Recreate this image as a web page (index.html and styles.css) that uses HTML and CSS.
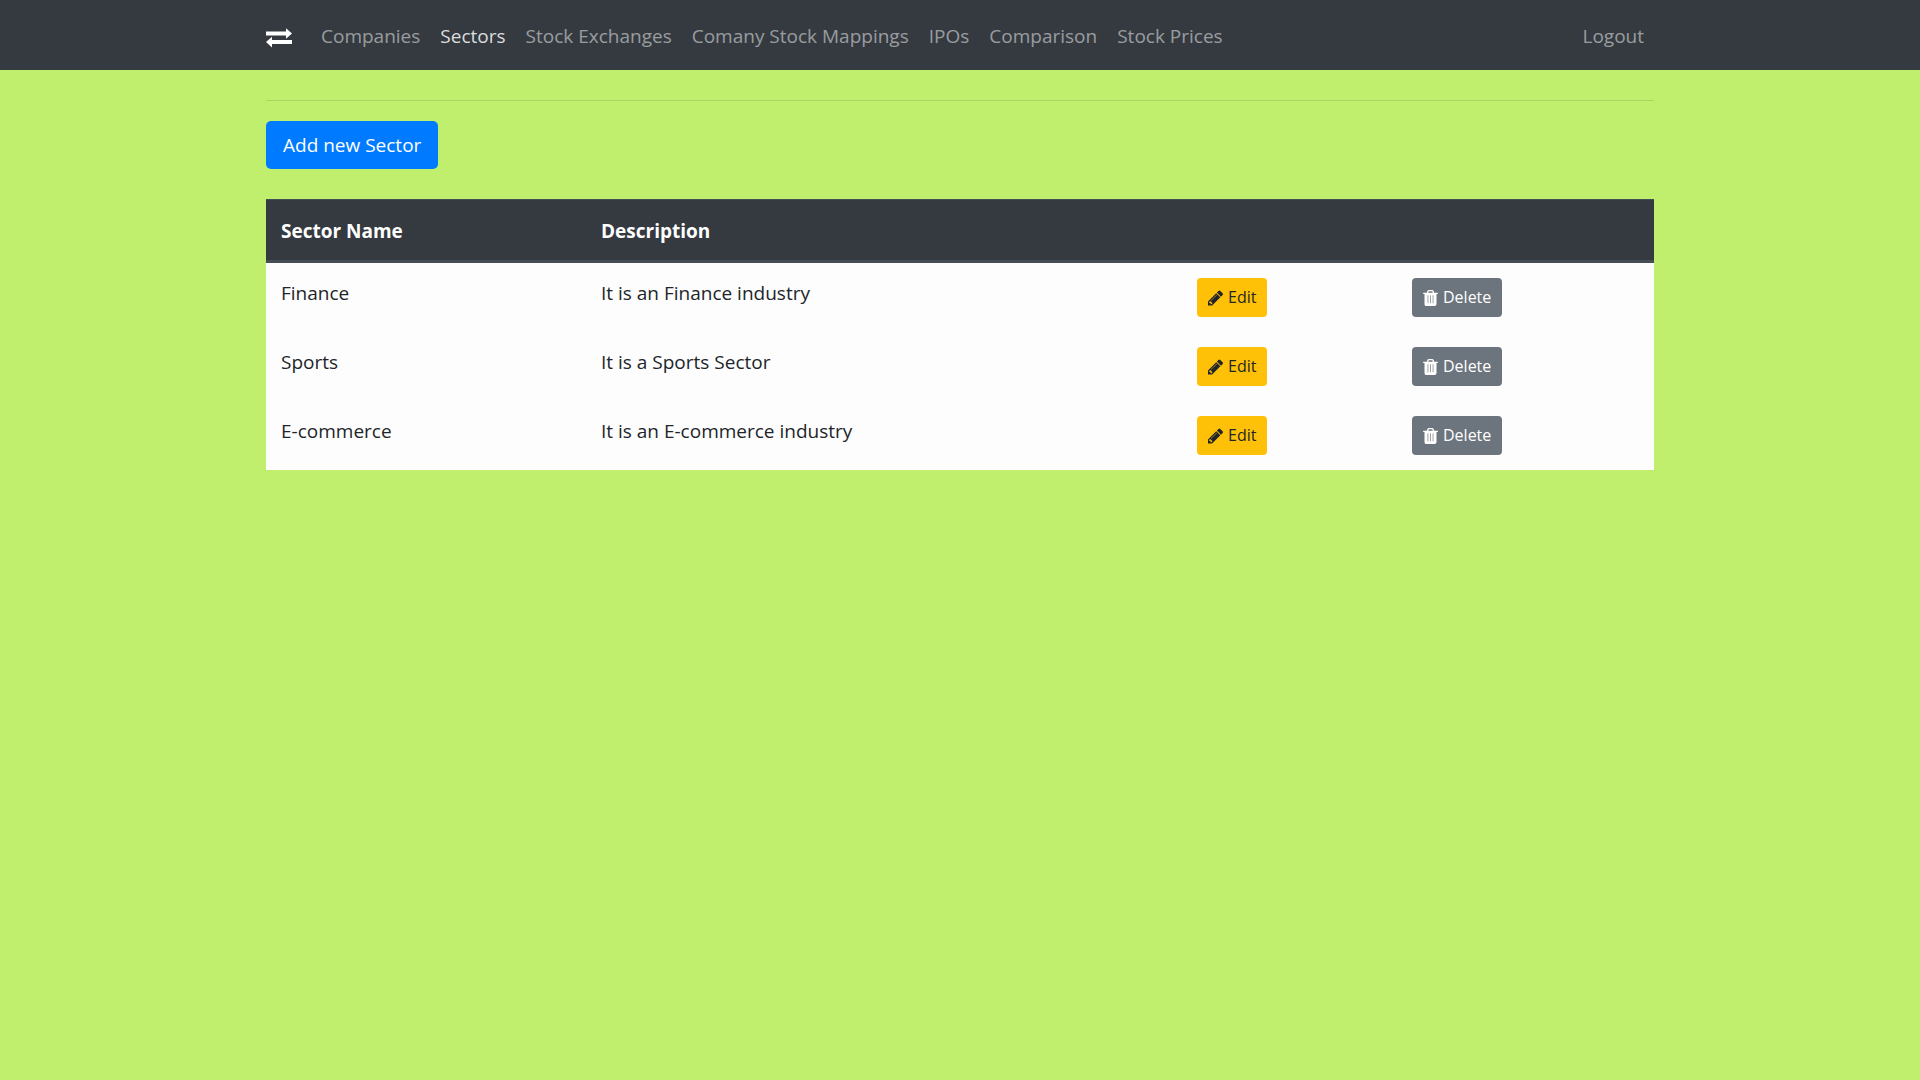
FILE: index.html
```html
<!DOCTYPE html>
<html lang="en">
<head>
<meta charset="utf-8">
<meta name="viewport" content="width=device-width, initial-scale=1">
<title>Sectors</title>
<link rel="stylesheet" href="styles.css">
</head>
<body>
<svg class="sprite" aria-hidden="true">
  <symbol id="pencil" viewBox="128 149 1515 1515"><path d="M491 1536l91-91-235-235-91 91v107h128v128h107zm523-928q0-22-22-22-10 0-17 7l-542 542q-7 7-7 17 0 22 22 22 10 0 17-7l542-542q7-7 7-17zm-54-192l416 416-832 832h-416v-416zm683 96q0 53-37 90l-166 166-416-416 166-165q36-38 90-38 53 0 91 38l235 234q37 39 37 91z"/></symbol>
  <symbol id="trash" viewBox="192 128 1408 1536"><path fill-rule="evenodd" d="M620 640h64v768h-64zM864 640h64v768h-64zM1108 640h64v768h-64zM672 384h448l-48-117q-7-9-17-11h-317q-10 2-17 11zm928 32v64q0 14-9 23t-23 9h-96v948q0 83-47 143.5t-113 60.5h-832q-66 0-113-58.5t-47-141.5v-952h-96q-14 0-23-9t-9-23v-64q0-14 9-23t23-9h309l70-167q15-37 54-63t79-26h320q40 0 79 26t54 63l70 167h309q14 0 23 9t9 23z"/></symbol>
</svg>
<header class="navbar">
  <nav class="container navbar-inner">
    <a class="brand" href="#" aria-label="Home">
      <svg class="brand-icon" viewBox="0 0 26 20"><path d="M0 3.5H20V.3L26 5.5L20 10.7V7.5H0ZM26 12H6V8.8L0 14L6 19.6V16H26Z"/></svg>
    </a>
    <ul class="nav">
      <li><a class="nav-link" href="#">Companies</a></li>
      <li><a class="nav-link active" href="#" aria-current="page">Sectors</a></li>
      <li><a class="nav-link" href="#">Stock Exchanges</a></li>
      <li><a class="nav-link" href="#">Comany Stock Mappings</a></li>
      <li><a class="nav-link" href="#">IPOs</a></li>
      <li><a class="nav-link" href="#">Comparison</a></li>
      <li><a class="nav-link" href="#">Stock Prices</a></li>
    </ul>
    <a class="nav-link logout" href="#">Logout</a>
  </nav>
</header>
<main class="container">
  <hr class="divider">
  <button class="btn btn-primary" type="button">Add new Sector</button>
  <table class="table">
    <colgroup><col class="col-name"><col><col class="col-edit"><col class="col-delete"></colgroup>
    <thead>
      <tr><th scope="col">Sector Name</th><th scope="col">Description</th><th></th><th></th></tr>
    </thead>
    <tbody>
      <tr>
        <td>Finance</td><td>It is an Finance industry</td>
        <td><button class="btn btn-sm btn-warning" type="button"><svg class="icon"><use href="#pencil"/></svg>Edit</button></td>
        <td><button class="btn btn-sm btn-secondary" type="button"><svg class="icon"><use href="#trash"/></svg>Delete</button></td>
      </tr>
      <tr>
        <td>Sports</td><td>It is a Sports Sector</td>
        <td><button class="btn btn-sm btn-warning" type="button"><svg class="icon"><use href="#pencil"/></svg>Edit</button></td>
        <td><button class="btn btn-sm btn-secondary" type="button"><svg class="icon"><use href="#trash"/></svg>Delete</button></td>
      </tr>
      <tr>
        <td>E-commerce</td><td>It is an E-commerce industry</td>
        <td><button class="btn btn-sm btn-warning" type="button"><svg class="icon"><use href="#pencil"/></svg>Edit</button></td>
        <td><button class="btn btn-sm btn-secondary" type="button"><svg class="icon"><use href="#trash"/></svg>Delete</button></td>
      </tr>
    </tbody>
  </table>
</main>
</body>
</html>
```
FILE: styles.css
```css
*, *::before, *::after { box-sizing: border-box; }

body {
  margin: 0;
  background: #bfef6c;
  color: #212529;
  font-family: "Segoe UI", "Open Sans", "Noto Sans", sans-serif;
  font-size: 19px;
  line-height: 30px;
}

.sprite { display: none; }

.container {
  width: 100%;
  max-width: 1428px;
  margin: 0 auto;
  padding: 0 20px;
}

.navbar { background: #343a40; }

.navbar-inner {
  display: flex;
  align-items: center;
  min-height: 70px;
}

.brand {
  display: flex;
  margin-right: 19px;
  padding-top: 6px;
}

.brand-icon {
  width: 26px;
  height: 20px;
  fill: #fff;
}

.nav {
  display: flex;
  flex-wrap: wrap;
  margin: 0;
  padding: 0;
  list-style: none;
}

.nav-link {
  display: block;
  padding: 11px 10px 9px;
  color: rgba(255, 255, 255, .5);
  text-decoration: none;
}

.nav-link.active { color: #dcddde; }

.logout { margin-left: auto; }

.divider {
  margin: 30px 0 20px;
  border: 0;
  border-top: 1px solid rgba(0, 0, 0, .1);
}

.btn {
  display: inline-flex;
  align-items: center;
  justify-content: center;
  padding: 8px 16px;
  border: 1px solid transparent;
  border-radius: 5px;
  font: inherit;
  cursor: pointer;
}

.btn-primary { background: #007bff; color: #fff; }
.btn-warning { background: #ffc107; color: #212529; }
.btn-secondary { background: #6c757d; color: #fff; }

.btn-sm {
  gap: 5px;
  padding: 5px 10px;
  border-radius: 4px;
  font-size: 16px;
  line-height: 27px;
}

.icon {
  width: 15px;
  height: 16px;
  fill: currentColor;
}

.table {
  width: 100%;
  margin-top: 30px;
  border-spacing: 0;
  table-layout: fixed;
  background: #fdfdfd;
}

.col-name { width: 320px; }
.col-edit { width: 215px; }
.col-delete { width: 257px; }

.table th {
  padding: 16px 15px 14px;
  border-top: 1px solid #454d55;
  border-bottom: 3px solid #454d55;
  background: #343a40;
  color: #fff;
  font-weight: 700;
  text-align: left;
}

.table td {
  padding: 15px;
  vertical-align: top;
}

.table td .btn { display: flex; }
```
